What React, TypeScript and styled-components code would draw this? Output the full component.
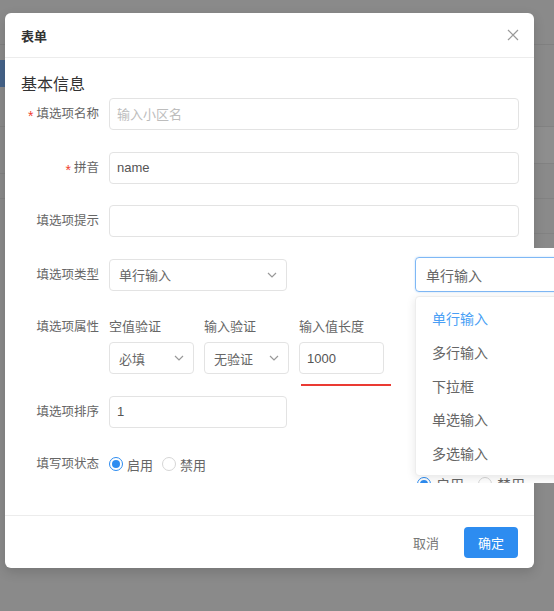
import React, {FC} from 'react'
import styled, {createGlobalStyle} from 'styled-components'

const GlobalStyle = createGlobalStyle`
  html, body {
    margin: 0;
    padding: 0;
  }
  body {
    width: 554px;
    height: 611px;
    overflow: hidden;
    background: #8a8a8a;
    font-family: "Liberation Sans", "Noto Sans CJK SC", sans-serif;
  }
  * {
    box-sizing: border-box;
  }
`

const Screen = styled.div`
  position: relative;
  width: 554px;
  height: 611px;
  overflow: hidden;
  background: #8a8a8a;
`

/* page behind the mask */
const BackHeader = styled.div`
  height: 45px;
  border-bottom: 1px solid #808080;
`
const BackBody = styled.div`
  display: grid;
  grid-template-columns: 200px 1fr;
`
const BackSide = styled.div`
  padding-top: 15px;
`
const BackNavItem = styled.div<{active?: boolean; h: number}>`
  height: ${p => p.h}px;
  background: ${p => (p.active ? '#46648a' : 'transparent')};
  border-bottom: ${p => (p.active ? 'none' : '1px solid #828282')};
`
const BackMain = styled.div`
  display: flex;
  flex-direction: column;
`
const BackRow = styled.div<{h: number; tint?: boolean}>`
  height: ${p => p.h}px;
  border-bottom: 1px solid #828282;
  background: ${p => (p.tint ? '#8e8e8e' : 'transparent')};
`

/* modal */
const Modal = styled.div`
  position: absolute;
  left: 5px;
  top: 13px;
  width: 529px;
  height: 555px;
  background: #fff;
  border-radius: 6px;
  box-shadow: 0 4px 12px rgba(0, 0, 0, 0.15);
  display: flex;
  flex-direction: column;
`
const ModalHeader = styled.div`
  height: 45px;
  flex-shrink: 0;
  display: flex;
  align-items: center;
  justify-content: space-between;
  padding: 0 15px 0 16px;
  border-bottom: 1px solid #ececec;
`
const ModalTitle = styled.div`
  font-size: 13px;
  font-weight: 700;
  color: #333;
`
const CloseButton = styled.button`
  border: none;
  background: none;
  padding: 0;
  width: 13px;
  height: 13px;
  display: flex;
  align-items: center;
  justify-content: center;
  cursor: pointer;
`
const ModalBody = styled.div`
  flex: 1;
  padding: 16px 15px 0 16px;
`
const SectionTitle = styled.div`
  font-size: 16px;
  line-height: 22px;
  color: #333;
  margin-bottom: 2px;
`
const FormRow = styled.div<{last?: boolean}>`
  display: flex;
  align-items: flex-start;
  margin-bottom: ${p => (p.last ? 0 : 21.5)}px;
`
const Label = styled.div<{lh?: number}>`
  width: 88px;
  height: ${p => p.lh ?? 32}px;
  flex-shrink: 0;
  padding-right: 10px;
  text-align: right;
  font-size: 12.5px;
  line-height: ${p => p.lh ?? 32}px;
  color: #666;
  white-space: nowrap;
`
const Star = styled.span`
  display: inline-block;
  color: #f0412f;
  font-size: 14px;
  line-height: 0;
  margin-right: 3px;
  vertical-align: -3px;
`
const TextInput = styled.input<{w?: number}>`
  width: ${p => (p.w ? `${p.w}px` : '100%')};
  height: 32px;
  border: 1px solid #e3e3e3;
  border-radius: 4px;
  padding: 0 7px;
  font-family: inherit;
  font-size: 13px;
  color: #555;
  outline: none;
  &::placeholder {
    color: #bdbdbd;
  }
`
const SelectBox = styled.div<{w: number}>`
  width: ${p => p.w}px;
  height: 32px;
  border: 1px solid #e3e3e3;
  border-radius: 4px;
  padding: 0 9px 0 9px;
  display: flex;
  align-items: center;
  justify-content: space-between;
  font-size: 13px;
  color: #666;
`
const AttrGroup = styled.div`
  display: flex;
  gap: 10px;
`
const AttrCol = styled.div<{mark?: boolean}>`
  position: relative;
  width: 85px;
  &::after {
    content: '';
    display: ${p => (p.mark ? 'block' : 'none')};
    position: absolute;
    left: 2px;
    top: 72px;
    width: 90px;
    height: 2px;
    background: #ea3a33;
  }
`
const SubLabel = styled.div`
  font-size: 13px;
  line-height: 30px;
  color: #666;
  white-space: nowrap;
`
const RadioGroup = styled.div<{large?: boolean}>`
  display: flex;
  align-items: center;
  height: ${p => (p.large ? 16 : 30)}px;
  gap: ${p => (p.large ? 14 : 9)}px;
`
const RadioItem = styled.label<{large?: boolean}>`
  display: flex;
  align-items: center;
  gap: ${p => (p.large ? 5 : 4)}px;
  font-size: ${p => (p.large ? 14 : 13)}px;
  color: #666;
`
const RadioDot = styled.span<{checked?: boolean}>`
  width: 14px;
  height: 14px;
  border-radius: 50%;
  border: 1px solid ${p => (p.checked ? '#2d8cf0' : '#d6d6d6')};
  display: flex;
  align-items: center;
  justify-content: center;
  &::after {
    content: '';
    width: 8px;
    height: 8px;
    border-radius: 50%;
    background: #2d8cf0;
    display: ${p => (p.checked ? 'block' : 'none')};
  }
`
const ModalFooter = styled.div`
  height: 53px;
  flex-shrink: 0;
  border-top: 1px solid #ececec;
  display: flex;
  align-items: center;
  justify-content: flex-end;
  gap: 10px;
  padding-right: 16px;
`
const TextButton = styled.button`
  border: none;
  background: none;
  height: 31px;
  padding: 0 15px;
  font-family: inherit;
  font-size: 13px;
  color: #777;
`
const PrimaryButton = styled.button`
  border: none;
  background: #2d8cf0;
  color: #fff;
  width: 54px;
  height: 31px;
  border-radius: 4px;
  font-family: inherit;
  font-size: 13px;
`

/* open select floating over the right side */
const FloatPanel = styled.div`
  position: absolute;
  left: 400px;
  top: 248px;
  width: 154px;
  height: 235px;
  overflow: hidden;
  background: #fff;
  padding: 9px 0 0 15px;
`
const OpenSelect = styled.div`
  width: 160px;
  height: 35px;
  border: 1px solid #7fb8f5;
  border-radius: 4px;
  box-shadow: 0 0 2px rgba(45, 140, 240, 0.35);
  padding-left: 10px;
  display: flex;
  align-items: center;
  font-size: 14px;
  color: #666;
`
const Dropdown = styled.ul`
  position: relative;
  z-index: 1;
  list-style: none;
  margin: 4px 0 0;
  width: 160px;
  height: 180px;
  padding: 6px 0 3px;
  background: #fff;
  border: 1px solid #ededed;
  border-radius: 4px;
  box-shadow: 0 2px 10px rgba(0, 0, 0, 0.1);
`
const DropdownItem = styled.li<{active?: boolean}>`
  height: 33.8px;
  line-height: 33.8px;
  padding-left: 16px;
  font-size: 14px;
  color: ${p => (p.active ? '#4a9ff5' : '#666')};
`
const PeekRow = styled.div`
  padding-left: 2px;
`

const Chevron: FC = () => (
  <svg width="10" height="6" viewBox="0 0 10 6">
    <polyline points="1,1 5,5 9,1" fill="none" stroke="#999" strokeWidth="1.2" />
  </svg>
)

const CloseIcon: FC = () => (
  <svg width="12" height="12" viewBox="0 0 12 12">
    <path d="M1 1 L11 11 M11 1 L1 11" stroke="#999" strokeWidth="1.2" />
  </svg>
)

const typeOptions = ['单行输入', '多行输入', '下拉框', '单选输入', '多选输入']

const StatusRadios: FC<{large?: boolean}> = ({large}) => (
  <RadioGroup large={large}>
    <RadioItem large={large}>
      <RadioDot checked />
      启用
    </RadioItem>
    <RadioItem large={large}>
      <RadioDot />
      禁用
    </RadioItem>
  </RadioGroup>
)

const App: FC = () => {
  return (
    <Screen>
      <GlobalStyle />
      <BackHeader />
      <BackBody>
        <BackSide>
          <BackNavItem active h={27} />
          <BackNavItem h={40} />
          <BackNavItem h={47} />
          <BackNavItem h={25} />
        </BackSide>
        <BackMain>
          <BackRow h={82} />
          <BackRow h={37} tint />
          <BackRow h={35} />
          <BackRow h={35} />
        </BackMain>
      </BackBody>

      <Modal>
        <ModalHeader>
          <ModalTitle>表单</ModalTitle>
          <CloseButton aria-label="close">
            <CloseIcon />
          </CloseButton>
        </ModalHeader>
        <ModalBody>
          <SectionTitle>基本信息</SectionTitle>
          <FormRow>
            <Label>
              <Star>*</Star>填选项名称
            </Label>
            <TextInput placeholder="输入小区名" readOnly />
          </FormRow>
          <FormRow>
            <Label>
              <Star>*</Star>拼音
            </Label>
            <TextInput value="name" readOnly />
          </FormRow>
          <FormRow>
            <Label>填选项提示</Label>
            <TextInput readOnly />
          </FormRow>
          <FormRow>
            <Label>填选项类型</Label>
            <SelectBox w={178}>
              单行输入
              <Chevron />
            </SelectBox>
          </FormRow>
          <FormRow>
            <Label lh={30}>填选项属性</Label>
            <AttrGroup>
              <AttrCol>
                <SubLabel>空值验证</SubLabel>
                <SelectBox w={85}>
                  必填
                  <Chevron />
                </SelectBox>
              </AttrCol>
              <AttrCol>
                <SubLabel>输入验证</SubLabel>
                <SelectBox w={85}>
                  无验证
                  <Chevron />
                </SelectBox>
              </AttrCol>
              <AttrCol mark>
                <SubLabel>输入值长度</SubLabel>
                <TextInput w={85} value="1000" readOnly />
              </AttrCol>
            </AttrGroup>
          </FormRow>
          <FormRow>
            <Label>填选项排序</Label>
            <TextInput w={178} value="1" readOnly />
          </FormRow>
          <FormRow last>
            <Label lh={30}>填写项状态</Label>
            <StatusRadios />
          </FormRow>
        </ModalBody>
        <ModalFooter>
          <TextButton>取消</TextButton>
          <PrimaryButton>确定</PrimaryButton>
        </ModalFooter>
      </Modal>

      <FloatPanel>
        <OpenSelect>单行输入</OpenSelect>
        <Dropdown>
          {typeOptions.map((opt, i) => (
            <DropdownItem key={opt} active={i === 0}>
              {opt}
            </DropdownItem>
          ))}
        </Dropdown>
        <PeekRow>
          <StatusRadios large />
        </PeekRow>
      </FloatPanel>
    </Screen>
  )
}

export default App
